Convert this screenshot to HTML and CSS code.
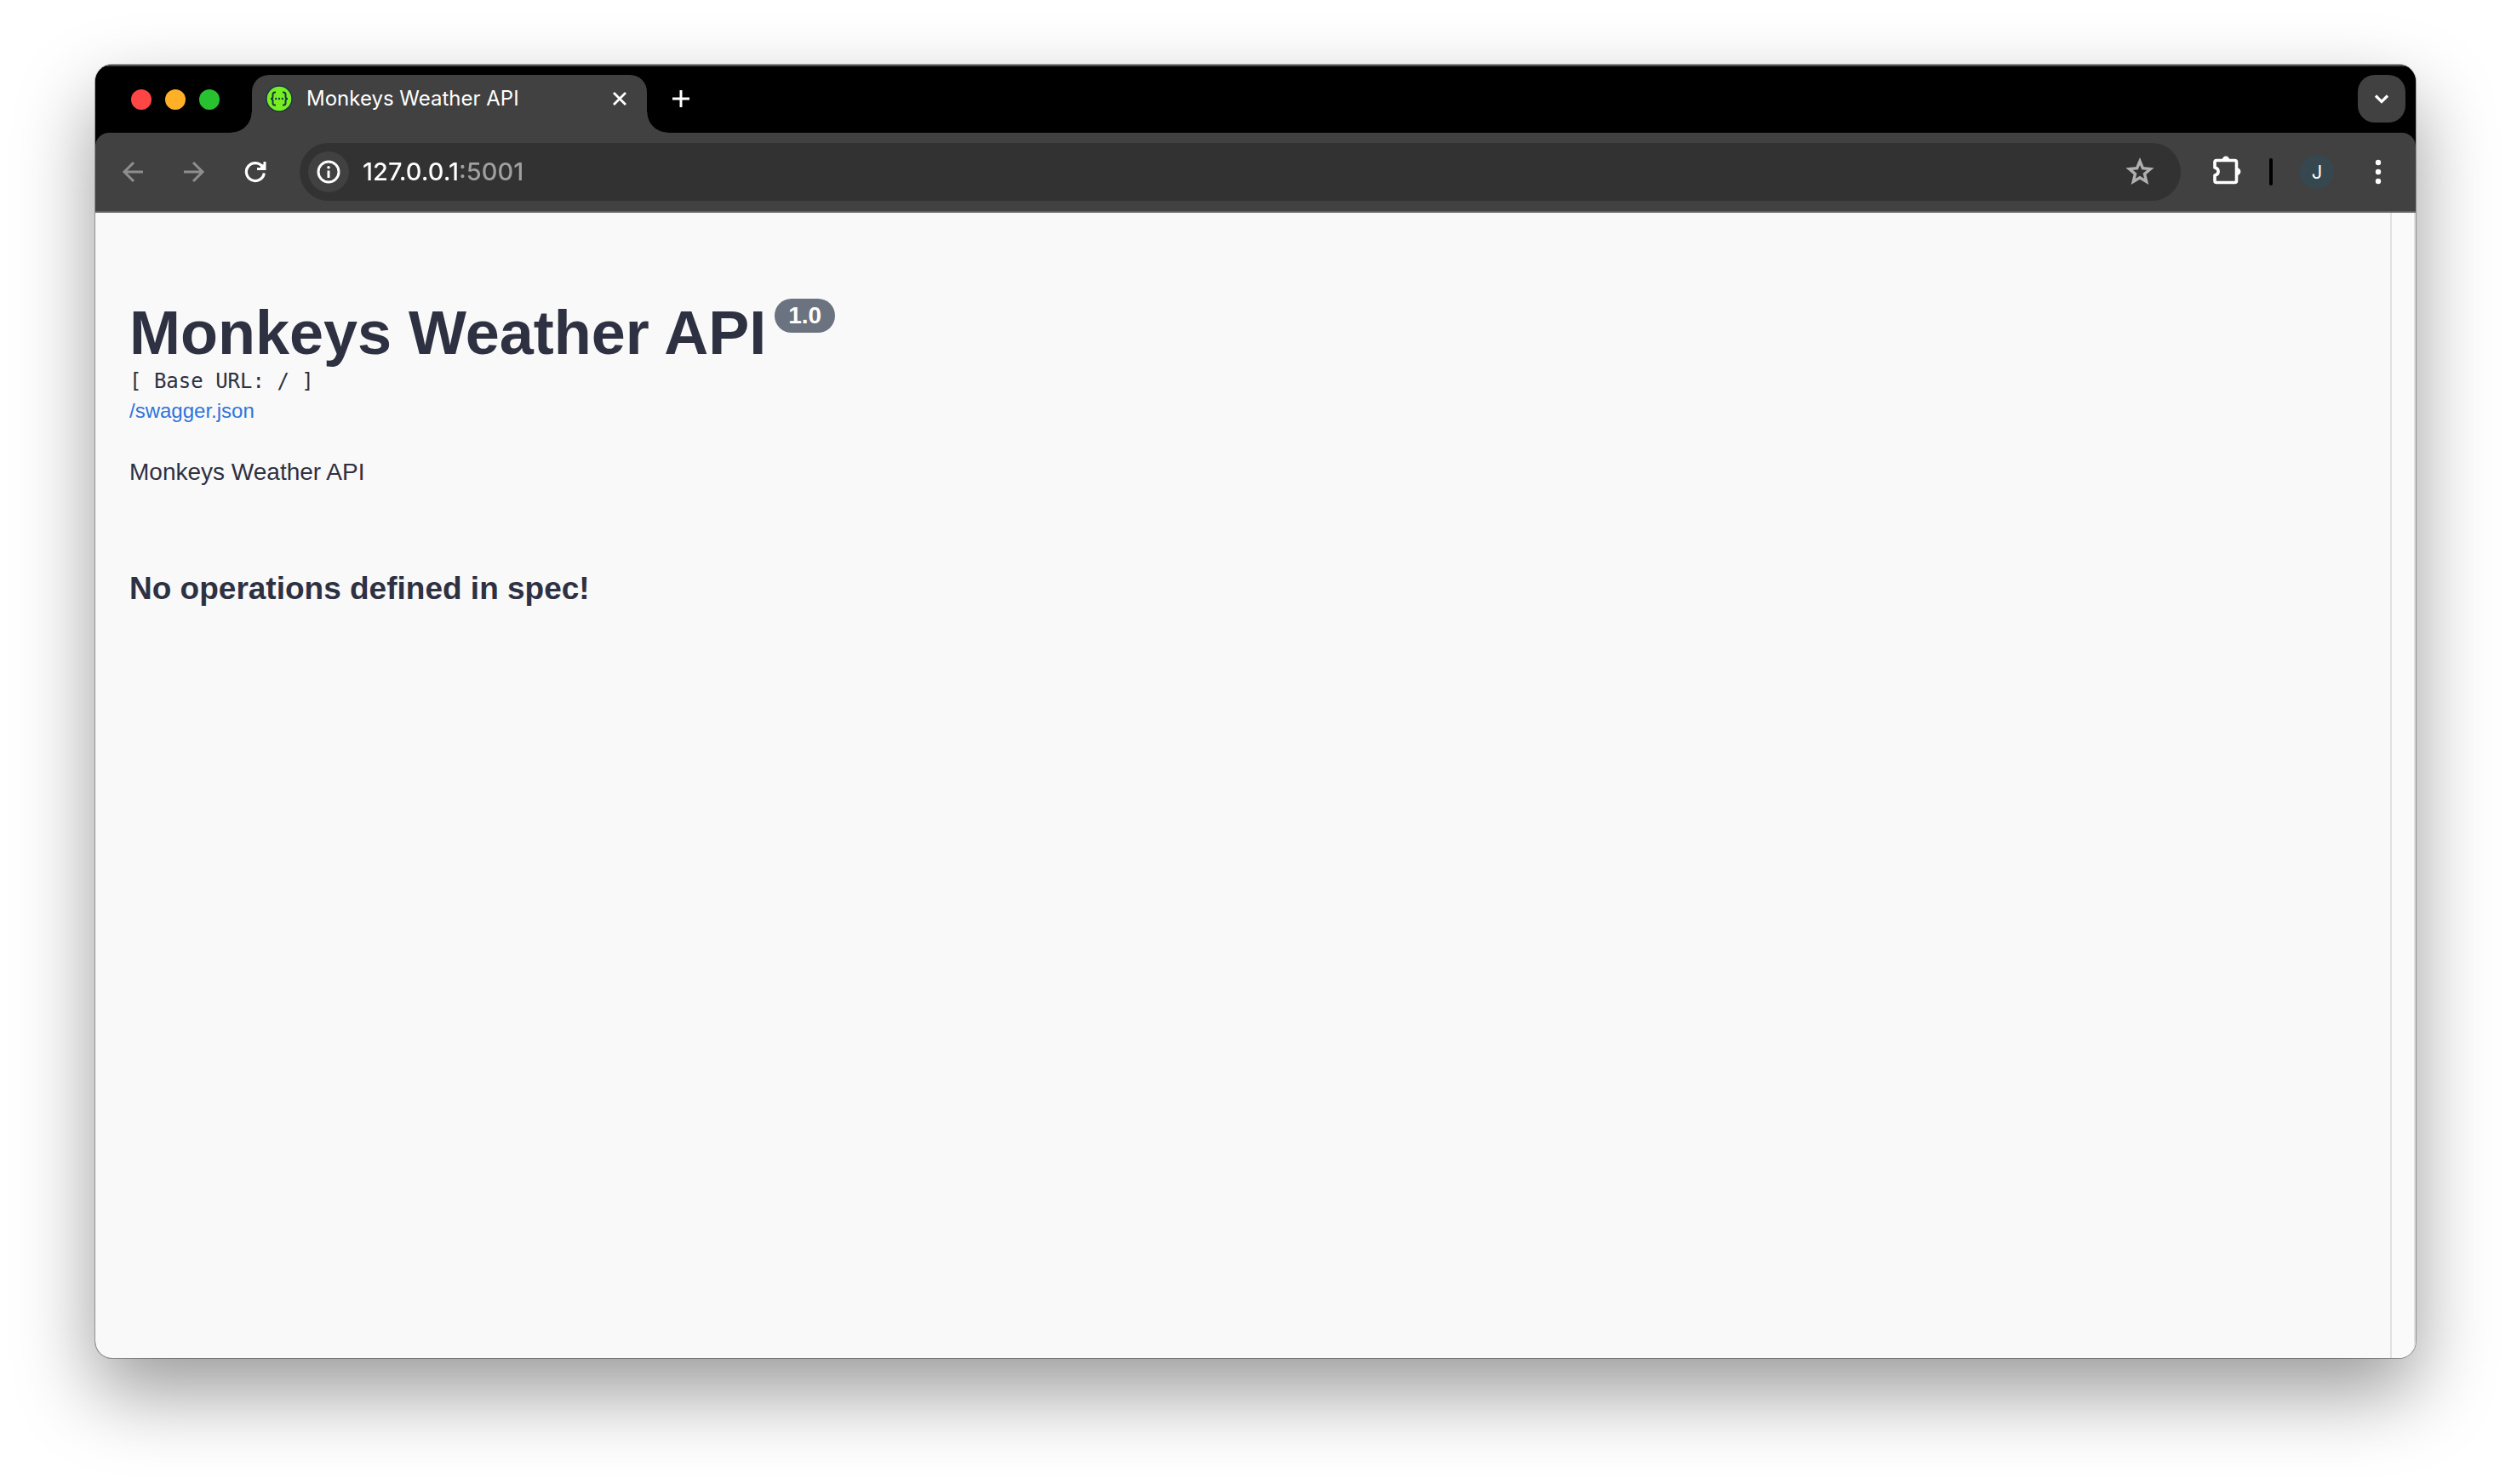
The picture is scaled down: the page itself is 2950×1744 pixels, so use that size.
FILE: index.html
```html
<!DOCTYPE html>
<html lang="en">
<head>
<meta charset="utf-8">
<title>Monkeys Weather API</title>
<link rel="stylesheet" href="styles.css">
</head>
<body>
<div class="window">
  <header class="tab-strip">
    <div class="lights">
      <button class="light light-close" aria-label="Close window"></button>
      <button class="light light-minimize" aria-label="Minimize window"></button>
      <button class="light light-zoom" aria-label="Zoom window"></button>
    </div>
    <div class="tab">
      <svg class="favicon" viewBox="0 0 32 32" aria-hidden="true">
        <circle cx="16" cy="16" r="15" fill="#77ee22" stroke="#173647" stroke-width="1.4"/>
        <g fill="none" stroke="#173647" stroke-width="2">
          <path d="M12 8.500h-1q-2.500 0-2.500 2.500v2.500q0 2.500-2.500 2.500q2.500 0 2.500 2.500v2.500q0 2.500 2.500 2.500h1"/>
          <path d="M20 8.500h1q2.500 0 2.500 2.500v2.500q0 2.500 2.500 2.500q-2.500 0-2.500 2.500v2.500q0 2.500-2.500 2.500h-1"/>
        </g>
        <g fill="#173647"><circle cx="12.200" cy="16" r="1.200"/><circle cx="16" cy="16" r="1.200"/><circle cx="19.800" cy="16" r="1.200"/></g>
      </svg>
      <span class="tab-title">Monkeys Weather API</span>
      <button class="icon-button" aria-label="Close tab">
        <svg width="24" height="24" viewBox="0 0 24 24"><path d="M5 5l14 14M19 5L5 19" stroke="#fff" stroke-width="2.800"/></svg>
      </button>
    </div>
    <button class="icon-button" aria-label="New tab">
      <svg width="24" height="24" viewBox="0 0 24 24"><path d="M12 2v20M2 12h20" stroke="#fff" stroke-width="3"/></svg>
    </button>
    <button class="tab-search" aria-label="Search tabs">
      <svg width="24" height="24" viewBox="0 0 24 24"><path d="M5 8.500l7 7l7-7" fill="none" stroke="#fff" stroke-width="3.200"/></svg>
    </button>
  </header>

  <nav class="toolbar">
    <div class="nav-buttons">
      <button class="icon-button" aria-label="Back">
        <svg width="32" height="32" viewBox="0 0 32 32"><path d="M28 16H6M17 5L6 16l11 11" fill="none" stroke="#8e8e8e" stroke-width="3"/></svg>
      </button>
      <button class="icon-button" aria-label="Forward">
        <svg width="32" height="32" viewBox="0 0 32 32"><path d="M4 16h22M15 5l11 11l-11 11" fill="none" stroke="#8e8e8e" stroke-width="3"/></svg>
      </button>
      <button class="icon-button" aria-label="Reload">
        <svg width="32" height="32" viewBox="0 0 32 32"><path d="M26.300 17.500A10.500 10.500 0 1 1 24.500 10" fill="none" stroke="#fff" stroke-width="3.200"/><path d="M28.500 4v10H18v-3h7.500V4z" fill="#fff"/><path d="M22 8l4-1v5h-4z" fill="#fff"/></svg>
      </button>
    </div>
    <div class="omnibox">
      <button class="site-info" aria-label="View site information">
        <svg width="28" height="28" viewBox="0 0 28 28"><circle cx="14" cy="14" r="12" fill="none" stroke="#fff" stroke-width="3"/><path d="M14 12.500V21" stroke="#fff" stroke-width="3"/><circle cx="14" cy="8.800" r="1.800" fill="#fff"/></svg>
      </button>
      <input class="address" type="text" aria-label="Address" value="127.0.0.1:5001" spellcheck="false">
      <button class="icon-button" aria-label="Bookmark this page">
        <svg width="36" height="36" viewBox="0 0 36 36"><path d="M18 5.500l3.400 8.200l9 .8l-6.900 5.900l2.200 9L18 24.700l-7.700 4.700l2.200-9l-6.900-5.900l9-.8z" fill="none" stroke="#b0b0b0" stroke-width="3.400"/></svg>
      </button>
    </div>
    <div class="actions">
      <button class="icon-button" aria-label="Extensions">
        <svg width="36" height="36" viewBox="0 0 36 36"><path d="M4 6.500q0-2 2-2h21.500q2 0 2 2v22q0 2-2 2H6q-2 0-2-2v-6.500c5.500-1 5.500-8 0-9z" fill="none" stroke="#fff" stroke-width="3.600" stroke-linejoin="round"/><path d="M12.600 4a4.400 4.400 0 0 1 8.800 0zM30 13.200a4.400 4.400 0 0 1 0 8.800z" fill="#fff"/></svg>
      </button>
      <span class="divider"></span>
      <button class="avatar" aria-label="Profile">J</button>
      <button class="icon-button" aria-label="Menu">
        <svg width="32" height="32" viewBox="0 0 32 32" fill="#fff"><circle cx="16" cy="5" r="3.200"/><circle cx="16" cy="16" r="3.200"/><circle cx="16" cy="27" r="3.200"/></svg>
      </button>
    </div>
  </nav>

  <main class="page">
    <div class="content">
      <h1 class="api-title">Monkeys Weather API<span class="version">1.0</span></h1>
      <pre class="base-url">[ Base URL: / ]</pre>
      <a class="spec-link" href="/swagger.json">/swagger.json</a>
      <p class="description">Monkeys Weather API</p>
      <h3 class="empty">No operations defined in spec!</h3>
    </div>
    <div class="scroll-gutter"></div>
  </main>
</div>
</body>
</html>
```
FILE: styles.css
```css
* { box-sizing: border-box; }

body {
  margin: 0;
  min-height: 100vh;
  padding: 76px 112px 148px;
  display: flex;
  background: #fff;
  font-family: "Liberation Sans", Arial, sans-serif;
  color: #2e3142;
}

button {
  padding: 0;
  border: 0;
  background: none;
  font: inherit;
  color: inherit;
}

svg { display: block; overflow: visible; }

.window {
  flex: 1;
  display: flex;
  flex-direction: column;
  overflow: hidden;
  border-radius: 20px;
  background: #000;
  box-shadow: 0 0 0 1px rgba(0, 0, 0, 0.3), 0 40px 92px rgba(0, 0, 0, 0.4);
}

.tab-strip {
  display: flex;
  align-items: center;
  height: 80px;
  padding: 10px 12px 0 42px;
  border-top: 2px solid #4a4a4a;
  background: #000;
  font-family: Inter, "Liberation Sans", sans-serif;
}

.lights {
  display: flex;
  gap: 16px;
  padding-bottom: 10px;
  margin-right: 38px;
}

.light { width: 24px; height: 24px; border-radius: 50%; }
.light-close { background: #ff4645; }
.light-minimize { background: #ffb026; }
.light-zoom { background: #28c231; }

.tab {
  position: relative;
  display: flex;
  align-items: center;
  width: 464px;
  height: 68px;
  padding: 0 20px 12px 16px;
  border-radius: 20px 20px 0 0;
  background: #414141;
}

.tab::before,
.tab::after {
  content: "";
  position: absolute;
  bottom: 0;
  width: 24px;
  height: 24px;
}

.tab::before { right: 100%; background: radial-gradient(circle at 0 0, transparent 23px, #414141 24px); }
.tab::after { left: 100%; background: radial-gradient(circle at 100% 0, transparent 23px, #414141 24px); }

.favicon { width: 32px; height: 32px; }

.tab-title {
  flex: 1;
  margin-left: 16px;
  font-size: 24px;
  line-height: 32px;
  font-weight: 400;
  color: #fff;
}

.tab-strip > .icon-button { margin: 0 auto 12px 28px; }

.tab-search {
  display: grid;
  place-items: center;
  width: 56px;
  height: 56px;
  margin-bottom: 12px;
  border-radius: 20px;
  background: #414141;
}

.toolbar {
  display: flex;
  align-items: center;
  height: 94px;
  padding: 0 28px;
  border-bottom: 2px solid #646264;
  border-radius: 16px 16px 0 0;
  background: #414141;
  font-family: Inter, "Liberation Sans", sans-serif;
}

.nav-buttons { display: flex; gap: 40px; margin-right: 36px; }

.omnibox {
  flex: 1;
  display: flex;
  align-items: center;
  height: 68px;
  padding: 0 30px 0 10px;
  border-radius: 34px;
  background: #323232;
}

.site-info {
  display: grid;
  place-items: center;
  width: 48px;
  height: 48px;
  border-radius: 50%;
  background: #414141;
}

/* The host is white and the port after it is dimmed. */
.address {
  flex: 1;
  min-width: 0;
  height: 40px;
  margin-left: 16px;
  padding: 0;
  border: 0;
  outline: 0;
  font: 500 29px/40px Inter, "Liberation Sans", sans-serif;
  color: transparent;
  background: linear-gradient(90deg, #fff 115px, #a0a0a0 115px);
  -webkit-background-clip: text;
  background-clip: text;
}

.actions { display: flex; align-items: center; margin-left: 36px; }
.divider { width: 4px; height: 32px; margin: 0 32px; border-radius: 2px; background: #000; }

.avatar {
  width: 40px;
  height: 40px;
  margin-right: 36px;
  border-radius: 50%;
  background: #37474f;
  font-size: 22px;
  line-height: 40px;
  color: #fff;
}

.page {
  flex: 1;
  display: flex;
  background: #f9f9f9;
}

.content { flex: 1; padding: 98px 40px 40px; }
.scroll-gutter { width: 30px; border: solid #e0e0e0; border-width: 0 2px; background: #fafafa; }

.api-title {
  display: flex;
  align-items: flex-start;
  margin: 0;
  font-size: 72px;
  line-height: 86px;
}

.version {
  margin: 3px 0 0 10px;
  padding: 0 16px;
  border-radius: 20px;
  background: #6b7280;
  font-size: 28px;
  line-height: 40px;
  color: #fff;
}

.base-url {
  margin: 0;
  font: 24px/28px "DejaVu Sans Mono", monospace;
}

.spec-link {
  display: block;
  width: fit-content;
  margin-top: 5px;
  font-size: 24px;
  line-height: 32px;
  color: #2f74dc;
  text-decoration: none;
}

.description { margin: 38px 0 0; font-size: 28px; line-height: 36px; }
.empty { margin: 95px 0 0; font-size: 37px; line-height: 48px; }
```
